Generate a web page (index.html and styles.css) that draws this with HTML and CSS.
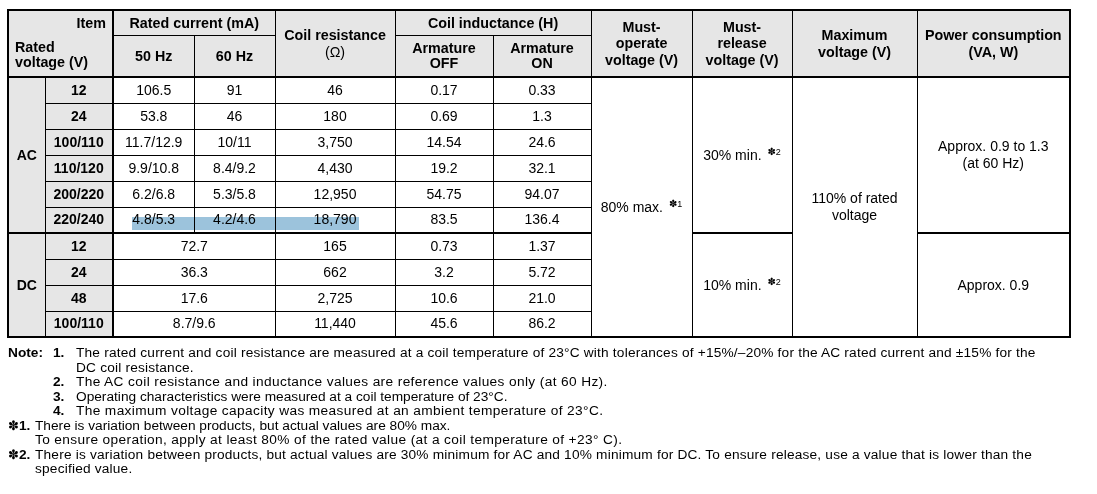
FILE: index.html
```html
<!DOCTYPE html>
<html>
<head>
<meta charset="utf-8">
<link rel="stylesheet" href="styles.css">
</head>
<body>
<div class="page">
  <div class="tablewrap">
    <table class="spec">
      <colgroup>
        <col class="c1"><col class="c2"><col class="c3"><col class="c4"><col class="c5"><col class="c6"><col class="c7"><col class="c8"><col class="c9"><col class="c10"><col class="c11">
      </colgroup>
      <thead>
        <tr class="h1">
          <th class="corner sep" colspan="2" rowspan="2">
            <div class="item">Item</div>
            <div class="rv">Rated<br>voltage (V)</div>
          </th>
          <th colspan="2">Rated current (mA)</th>
          <th rowspan="2">Coil resistance<br><span class="ohm">(Ω)</span></th>
          <th colspan="2">Coil inductance (H)</th>
          <th rowspan="2">Must-<br>operate<br>voltage (V)</th>
          <th rowspan="2">Must-<br>release<br>voltage (V)</th>
          <th rowspan="2">Maximum<br>voltage (V)</th>
          <th rowspan="2">Power consumption<br>(VA, W)</th>
        </tr>
        <tr class="h2">
          <th>50 Hz</th>
          <th>60 Hz</th>
          <th class="arm">Armature<br>OFF</th>
          <th class="arm">Armature<br>ON</th>
        </tr>
      </thead>
      <tbody>
        <tr>
          <th class="kind" rowspan="6">AC</th>
          <th class="sep">12</th>
          <td>106.5</td><td>91</td><td>46</td><td>0.17</td><td>0.33</td>
          <td rowspan="10">80% max. <span class="sup"><span class="ast">✽</span>1</span></td>
          <td rowspan="6">30% min. <span class="sup"><span class="ast">✽</span>2</span></td>
          <td rowspan="10">110% of rated<br>voltage</td>
          <td rowspan="6">Approx. 0.9 to 1.3<br>(at 60 Hz)</td>
        </tr>
        <tr><th class="sep">24</th><td>53.8</td><td>46</td><td>180</td><td>0.69</td><td>1.3</td></tr>
        <tr><th class="sep">100/110</th><td>11.7/12.9</td><td>10/11</td><td>3,750</td><td>14.54</td><td>24.6</td></tr>
        <tr><th class="sep">110/120</th><td>9.9/10.8</td><td>8.4/9.2</td><td>4,430</td><td>19.2</td><td>32.1</td></tr>
        <tr><th class="sep">200/220</th><td>6.2/6.8</td><td>5.3/5.8</td><td>12,950</td><td>54.75</td><td>94.07</td></tr>
        <tr><th class="sep">220/240</th><td>4.8/5.3</td><td>4.2/4.6</td><td>18,790</td><td>83.5</td><td>136.4</td></tr>
        <tr class="dcstart">
          <th class="kind" rowspan="4">DC</th>
          <th class="sep">12</th>
          <td colspan="2">72.7</td><td>165</td><td>0.73</td><td>1.37</td>
          <td rowspan="4">10% min. <span class="sup"><span class="ast">✽</span>2</span></td>
          <td rowspan="4">Approx. 0.9</td>
        </tr>
        <tr><th class="sep">24</th><td colspan="2">36.3</td><td>662</td><td>3.2</td><td>5.72</td></tr>
        <tr><th class="sep">48</th><td colspan="2">17.6</td><td>2,725</td><td>10.6</td><td>21.0</td></tr>
        <tr><th class="sep">100/110</th><td colspan="2">8.7/9.6</td><td>11,440</td><td>45.6</td><td>86.2</td></tr>
      </tbody>
    </table>
    <div class="selection"></div>
  </div>

  <div class="notes">
    <div class="nrow"><span class="lbl">Note:</span><span class="num">1.</span><span class="txt sp-a">The rated current and coil resistance are measured at a coil temperature of 23°C with tolerances of +15%/–20% for the AC rated current and ±15% for the DC coil resistance.</span></div>
    <div class="nrow"><span class="lbl"></span><span class="num">2.</span><span class="txt sp-b">The AC coil resistance and inductance values are reference values only (at 60 Hz).</span></div>
    <div class="nrow"><span class="lbl"></span><span class="num">3.</span><span class="txt">Operating characteristics were measured at a coil temperature of 23°C.</span></div>
    <div class="nrow"><span class="lbl"></span><span class="num">4.</span><span class="txt sp-b">The maximum voltage capacity was measured at an ambient temperature of 23°C.</span></div>
    <div class="nrow"><span class="star"><span class="ast">✽</span>1.</span><span class="txt"><span class="line">There is variation between products, but actual values are 80% max.</span><span class="line sp-b">To ensure operation, apply at least 80% of the rated value (at a coil temperature of +23° C).</span></span></div>
    <div class="nrow"><span class="star"><span class="ast">✽</span>2.</span><span class="txt sp-a">There is variation between products, but actual values are 30% minimum for AC and 10% minimum for DC. To ensure release, use a value that is lower than the specified value.</span></div>
  </div>
</div>
</body>
</html>
```

FILE: styles.css
```css
body {
  margin: 0;
  background: #ffffff;
  color: #000000;
  font-family: "Liberation Sans", Arial, sans-serif;
}

.page {
  padding: 9px 0 0 7px;
}

.tablewrap {
  position: relative;
  display: inline-block;
}

.spec {
  border-collapse: collapse;
  table-layout: fixed;
  width: 1063px;
  border: 2px solid #000;
  font-size: 14px;
}

.c1 { width: 37px; }
.c2 { width: 68px; }
.c3 { width: 81px; }
.c4 { width: 81px; }
.c5 { width: 120px; }
.c6 { width: 98px; }
.c7 { width: 98px; }
.c8 { width: 101px; }
.c9 { width: 100px; }
.c10 { width: 125px; }
.c11 { width: 153px; }

.spec th,
.spec td {
  border: 1px solid #000;
  padding: 0;
  text-align: center;
  vertical-align: middle;
  line-height: 17px;
}

.spec thead {
  border-bottom: 2px solid #000;
}

.spec thead th {
  background: #e6e6e6;
  font-weight: bold;
  font-size: 14.3px;
  line-height: 16.5px;
}

.spec .h1 { height: 25px; }
.spec .h2 { height: 42px; }

.spec thead th.arm {
  line-height: 15px;
}

.spec .ohm {
  font-weight: normal;
}

.spec th.corner {
  vertical-align: top;
  text-align: left;
}

.corner .item {
  height: 24px;
  line-height: 24px;
  text-align: right;
  padding-right: 6px;
}

.corner .rv {
  margin-top: 5px;
  padding-left: 6px;
  line-height: 15px;
}

.spec .sep {
  border-right: 2px solid #000;
}

.spec tbody tr {
  height: 26px;
}

.spec tbody th {
  background: #e6e6e6;
  font-weight: bold;
}

.spec tr.dcstart > * {
  border-top: 2px solid #000;
}

.sup {
  font-size: 9px;
  vertical-align: 5px;
  margin-left: 2px;
  line-height: 0;
}

.sup .ast {
  font-size: 10px;
  font-family: "DejaVu Sans", sans-serif;
}

.selection {
  position: absolute;
  left: 125px;
  top: 208px;
  width: 227px;
  height: 13px;
  background: #9cc3dc;
  mix-blend-mode: multiply;
}

.notes {
  margin-top: 4px;
  margin-left: 1px;
  width: 1044px;
  font-size: 13.7px;
  line-height: 14.5px;
}

.nrow {
  display: flex;
}

.nrow .lbl {
  width: 45px;
  flex: none;
  font-weight: bold;
}

.nrow .num {
  width: 23px;
  flex: none;
  font-weight: bold;
}

.nrow .star {
  width: 27px;
  flex: none;
  font-weight: bold;
}

.nrow .star .ast {
  font-family: "DejaVu Sans", sans-serif;
  font-size: 13px;
}

.nrow .txt {
  flex: 1;
}

.nrow .line {
  display: block;
}

.sp-a {
  letter-spacing: 0.19px;
}

.sp-b {
  letter-spacing: 0.37px;
}
```
